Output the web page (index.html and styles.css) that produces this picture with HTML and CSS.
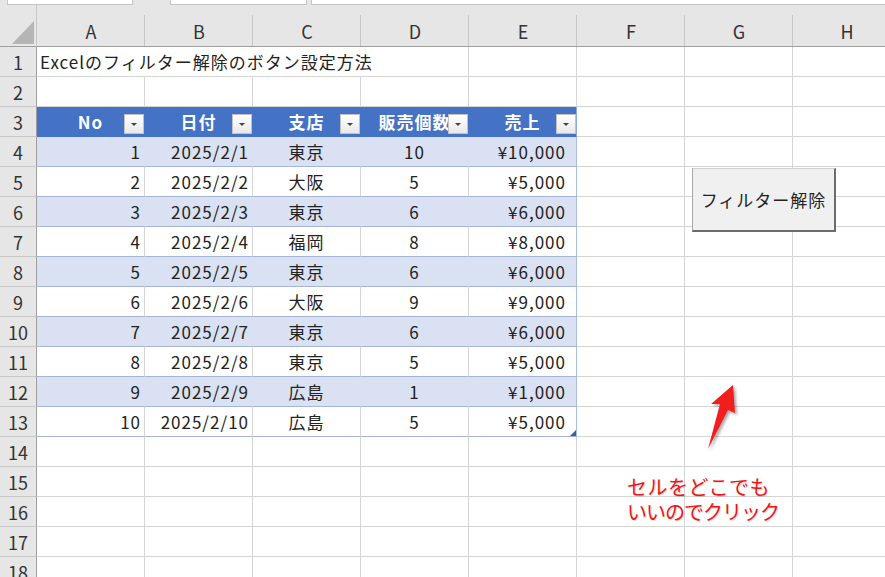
FILE: index.html
```html
<!DOCTYPE html>
<html lang="ja">
<head>
<meta charset="utf-8">
<title>Excel フィルター解除</title>
<link rel="stylesheet" href="styles.css">
</head>
<body>
<div class="topbar"><span class="tab t1"></span><span class="tab t2"></span><span class="tab t3"></span></div>
<div class="sheet">
  <div class="corner"><span class="tri"></span></div>
  <div class="ch">A</div><div class="ch">B</div><div class="ch">C</div><div class="ch">D</div><div class="ch">E</div><div class="ch">F</div><div class="ch">G</div><div class="ch">H</div>

  <div class="rh">1</div><div class="cell title">Excelのフィルター解除のボタン設定方法</div><div class="cell"></div><div class="cell"></div><div class="cell"></div><div class="cell"></div>
  <div class="rh">2</div><div class="cell"></div><div class="cell"></div><div class="cell"></div><div class="cell"></div><div class="cell"></div><div class="cell"></div><div class="cell"></div><div class="cell"></div>

  <div class="rh">3</div>
  <div class="cell th">No<span class="dd"></span></div>
  <div class="cell th">日付<span class="dd"></span></div>
  <div class="cell th">支店<span class="dd"></span></div>
  <div class="cell th">販売個数<span class="dd"></span></div>
  <div class="cell th last">売上<span class="dd"></span></div>
  <div class="cell"></div><div class="cell"></div><div class="cell"></div>

  <div class="rh">4</div><div class="cell band r">1</div><div class="cell band r">2025/2/1</div><div class="cell band c">東京</div><div class="cell band c">10</div><div class="cell band last re">¥10,000</div><div class="cell"></div><div class="cell"></div><div class="cell"></div>
  <div class="rh">5</div><div class="cell wt r">2</div><div class="cell wt r">2025/2/2</div><div class="cell wt c">大阪</div><div class="cell wt c">5</div><div class="cell wt last re">¥5,000</div><div class="cell"></div><div class="cell"></div><div class="cell"></div>
  <div class="rh">6</div><div class="cell band r">3</div><div class="cell band r">2025/2/3</div><div class="cell band c">東京</div><div class="cell band c">6</div><div class="cell band last re">¥6,000</div><div class="cell"></div><div class="cell"></div><div class="cell"></div>
  <div class="rh">7</div><div class="cell wt r">4</div><div class="cell wt r">2025/2/4</div><div class="cell wt c">福岡</div><div class="cell wt c">8</div><div class="cell wt last re">¥8,000</div><div class="cell"></div><div class="cell"></div><div class="cell"></div>
  <div class="rh">8</div><div class="cell band r">5</div><div class="cell band r">2025/2/5</div><div class="cell band c">東京</div><div class="cell band c">6</div><div class="cell band last re">¥6,000</div><div class="cell"></div><div class="cell"></div><div class="cell"></div>
  <div class="rh">9</div><div class="cell wt r">6</div><div class="cell wt r">2025/2/6</div><div class="cell wt c">大阪</div><div class="cell wt c">9</div><div class="cell wt last re">¥9,000</div><div class="cell"></div><div class="cell"></div><div class="cell"></div>
  <div class="rh">10</div><div class="cell band r">7</div><div class="cell band r">2025/2/7</div><div class="cell band c">東京</div><div class="cell band c">6</div><div class="cell band last re">¥6,000</div><div class="cell"></div><div class="cell"></div><div class="cell"></div>
  <div class="rh">11</div><div class="cell wt r">8</div><div class="cell wt r">2025/2/8</div><div class="cell wt c">東京</div><div class="cell wt c">5</div><div class="cell wt last re">¥5,000</div><div class="cell"></div><div class="cell"></div><div class="cell"></div>
  <div class="rh">12</div><div class="cell band r">9</div><div class="cell band r">2025/2/9</div><div class="cell band c">広島</div><div class="cell band c">1</div><div class="cell band last re">¥1,000</div><div class="cell"></div><div class="cell"></div><div class="cell"></div>
  <div class="rh">13</div><div class="cell wt r">10</div><div class="cell wt r">2025/2/10</div><div class="cell wt c">広島</div><div class="cell wt c">5</div><div class="cell wt last re">¥5,000<span class="handle"></span></div><div class="cell"></div><div class="cell"></div><div class="cell"></div>

  <div class="rh">14</div><div class="cell"></div><div class="cell"></div><div class="cell"></div><div class="cell"></div><div class="cell"></div><div class="cell"></div><div class="cell"></div><div class="cell"></div>
  <div class="rh">15</div><div class="cell"></div><div class="cell"></div><div class="cell"></div><div class="cell"></div><div class="cell"></div><div class="cell"></div><div class="cell"></div><div class="cell"></div>
  <div class="rh">16</div><div class="cell"></div><div class="cell"></div><div class="cell"></div><div class="cell"></div><div class="cell"></div><div class="cell"></div><div class="cell"></div><div class="cell"></div>
  <div class="rh">17</div><div class="cell"></div><div class="cell"></div><div class="cell"></div><div class="cell"></div><div class="cell"></div><div class="cell"></div><div class="cell"></div><div class="cell"></div>
  <div class="rh">18</div><div class="cell"></div><div class="cell"></div><div class="cell"></div><div class="cell"></div><div class="cell"></div><div class="cell"></div><div class="cell"></div><div class="cell"></div>
</div>

<button class="btn" type="button">フィルター解除</button>

<svg class="arrow" width="885" height="577" viewBox="0 0 885 577" aria-hidden="true">
  <polygon points="733,385 735,413 728,410 708,449 720,404 711,404" fill="#f21d1d"/>
</svg>

<div class="note"><span class="l1">セルをどこでも</span><span class="l2">いいのでクリック</span></div>
</body>
</html>
```

FILE: styles.css
```css
* { box-sizing: border-box; }

html, body {
  margin: 0;
  padding: 0;
}

body {
  width: 885px;
  height: 577px;
  overflow: hidden;
  position: relative;
  background: #ffffff;
  font-family: "Noto Sans CJK JP", "Noto Sans", sans-serif;
  color: #222;
}

.topbar {
  display: flex;
  height: 5px;
  background: #e6e6e6;
}

.tab {
  height: 5px;
  background: #fff;
  border: 1px solid #c4c4c4;
  border-top: none;
}

.t1 { margin-left: 7px; width: 126px; }
.t2 { margin-left: 37px; width: 137px; }
.t3 { margin-left: 4px; flex: 1; border-right: none; }

.sheet {
  display: grid;
  grid-template-columns: 37px repeat(8, 108px);
  grid-template-rows: 42px;
  grid-auto-rows: 30px;
  width: 901px;
}

.corner {
  background: #e6e6e6;
  border-right: 1px solid #c8c8c8;
  border-bottom: 1px solid #9f9f9f;
  display: flex;
  justify-content: flex-end;
  align-items: flex-end;
  padding: 0 2px 2px 0;
}

.tri {
  width: 22px;
  height: 23px;
  background: #b5b5b5;
  clip-path: polygon(100% 0, 100% 100%, 0 100%);
}

.ch {
  background-color: #e6e6e6;
  background-image: linear-gradient(#c6c6c6, #c6c6c6);
  background-size: 1px 31px;
  background-position: right bottom;
  background-repeat: no-repeat;
  border-bottom: 1px solid #9f9f9f;
  display: flex;
  align-items: center;
  justify-content: center;
  padding-top: 10px;
  font-size: 18px;
  color: #333;
}

.rh {
  background: #e6e6e6;
  border-right: 1px solid #9f9f9f;
  border-bottom: 1px solid #c8c8c8;
  display: flex;
  align-items: center;
  justify-content: center;
  font-size: 18px;
  color: #333;
}

.cell {
  border-right: 1px solid #d4d4d4;
  border-bottom: 1px solid #d4d4d4;
  display: flex;
  align-items: center;
  font-size: 17px;
  letter-spacing: 1px;
  white-space: nowrap;
  color: #222;
}

.title {
  grid-column: span 4;
  padding-left: 3px;
}

.th {
  position: relative;
  background: #4472c4;
  border-right-color: #4472c4;
  border-bottom-color: #4472c4;
  color: #fff;
  font-weight: 700;
  justify-content: center;
}

.th.last { border-right-color: #8eaadb; }

.dd {
  position: absolute;
  right: 0;
  top: 7px;
  width: 20px;
  height: 20px;
  background: linear-gradient(#ffffff, #e9e9e9);
  border: 1px solid #c2c2c2;
  display: flex;
  align-items: center;
  justify-content: center;
}

.dd::after {
  content: "";
  border-left: 3px solid transparent;
  border-right: 3px solid transparent;
  border-top: 3px solid #444;
}

.band {
  background: #d9e1f2;
  border-right-color: #d9e1f2;
  border-bottom-color: #a4b5d6;
}

.wt {
  background: #fff;
  border-bottom-color: #a4b5d6;
}

.last { border-right-color: #a9bde0; }
.band.last { border-right-color: #a9bde0; }

.r { justify-content: flex-end; padding-right: 3px; }
.c { justify-content: center; }
.re { justify-content: flex-end; padding-right: 10px; position: relative; }

.handle {
  position: absolute;
  right: 0;
  bottom: 0;
  width: 6px;
  height: 6px;
  background: #3c5aa6;
  clip-path: polygon(100% 0, 100% 100%, 0 100%);
}

.btn {
  position: absolute;
  left: 692px;
  top: 168px;
  width: 144px;
  height: 64px;
  margin: 0;
  padding: 0;
  background: #f0f0f0;
  border-top: 1px solid #d2d2d2;
  border-left: 1px solid #a8a8a8;
  border-right: 2px solid #6c6c6c;
  border-bottom: 2px solid #6c6c6c;
  font-family: "Noto Sans CJK JP", "Noto Sans", sans-serif;
  font-size: 17px;
  letter-spacing: 1px;
  color: #222;
  display: flex;
  align-items: center;
  justify-content: center;
}

.arrow {
  position: absolute;
  left: 0;
  top: 0;
  pointer-events: none;
  filter: drop-shadow(2px 2px 1.5px rgba(0, 0, 0, 0.35));
}

.note {
  position: absolute;
  left: 627px;
  top: 474px;
  display: flex;
  flex-direction: column;
  font-size: 20px;
  line-height: 25px;
  color: #f01414;
  text-shadow: 1px 1px 1px rgba(0, 0, 0, 0.15);
  white-space: nowrap;
}

.l1 { letter-spacing: 0.5px; }
.l2 { letter-spacing: -1px; }
```
